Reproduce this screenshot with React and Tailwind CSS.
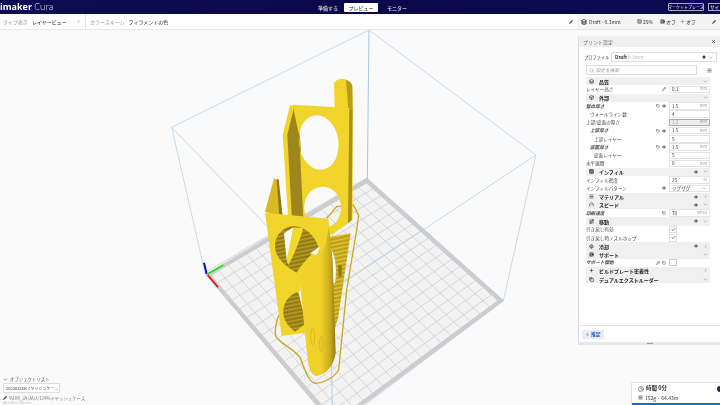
import React from "react";
import { ChevronDown, ChevronLeft, Pencil, RotateCcw, Search, X, Check, Eye, Menu, Clock, Layers, Box, Grid3x3, Gauge, Route, Fan, LifeBuoy, Plus, Copy, Star } from "lucide-react";

const Y = "url(#dots)";
const D = "#9f861c";

function lerp(a, b, t) { return [a[0] + (b[0] - a[0]) * t, a[1] + (b[1] - a[1]) * t]; }
const P0 = [145, 765], P1 = [620, 482], P2 = [1022, 842], P3 = [525, 1210];

function Grid() {
  const lines = [];
  const n = 17;
  for (let i = 1; i < n; i++) {
    const t = i / n;
    const a = lerp(P0, P1, t), b = lerp(P3, P2, t), c = lerp(P0, P3, t), d = lerp(P1, P2, t);
    lines.push(<line key={"a" + i} x1={a[0]} y1={a[1]} x2={b[0]} y2={b[1]} />);
    lines.push(<line key={"b" + i} x1={c[0]} y1={c[1]} x2={d[0]} y2={d[1]} />);
  }
  return <g stroke="#cfcfcf" strokeWidth="2.4">{lines}</g>;
}

function Scene() {
  return (
    <svg className="absolute inset-0" width="720" height="375" viewBox="0 30 720 375">
      <defs>
        <pattern id="stripes" width="6" height="4" patternUnits="userSpaceOnUse" patternTransform="rotate(4)">
          <rect width="6" height="4" fill="#b89b1d" />
          <rect width="6" height="2" fill="#8a7317" />
        </pattern>
        <pattern id="stripes2" width="6" height="4" patternUnits="userSpaceOnUse" patternTransform="rotate(4)">
          <rect width="6" height="4" fill="#e3c427" />
          <rect width="6" height="1.6" fill="#a58c1c" />
        </pattern>
        <pattern id="dots" width="4" height="4" patternUnits="userSpaceOnUse">
          <rect width="4" height="4" fill="#f5d82c" />
          <circle cx="2" cy="2" r="0.8" fill="#dcbb20" />
        </pattern>
        <linearGradient id="cyl2" x1="0" x2="1" y1="0" y2="0">
          <stop offset="0" stopColor="#f2d32a" />
          <stop offset="0.6" stopColor="#f0d028" />
          <stop offset="0.85" stopColor="#c9aa1f" />
          <stop offset="1" stopColor="#8f7818" />
        </linearGradient>
      </defs>
      <g transform="translate(160 20) scale(0.33333)">
        <polygon points={[P0, P1, P2, P3].map((p) => p.join(",")).join(" ")} fill="#f3f3f3" stroke="#cdcdcd" strokeWidth="13" strokeLinejoin="miter" />
        <Grid />
        <g fill="none" stroke="#bcd2e5" strokeWidth="2.4">
          <polygon points="135,758 620,474 1030,842 525,1222" stroke="#b7cde2" />
          <path d="M35 322 L627 30 L1128 405 L510 815 Z" />
          <path d="M35 322 L135 758" />
          <path d="M1128 405 L1030 842" />
          <path d="M627 30 L622 478" stroke="#a7c7e0" strokeWidth="3" />
          <path d="M510 815 L517 1160" stroke="#a7c7e0" />
        </g>

        <path d="M500 595 L530 560 L580 555 L596 585 L590 630 L560 810 L536 1050 C520 1075 490 1090 465 1090 C445 1085 435 1050 420 1012 C400 985 360 970 348 950 C342 930 350 900 357 885" fill="none" stroke="#c9a821" strokeWidth="4" />

        <path d="M522 190 C530 172 565 172 577 195 L578 270 L524 265 Z" fill={Y} />
        <path d="M558 180 C570 184 577 192 577 200 L578 270 L565 268 Z" fill="#b79c1e" />

        <polygon points="390,256 368,345 385,600 432,590 420,350 402,258" fill={Y} />
        <polygon points="402,262 382,345 396,600 432,590 420,350" fill={D} />
        <path fillRule="evenodd" d="M398 254 L570 264 L578 270 L578 600 L515 645 L430 600 L418 350 Z M418 345 A 58 78 -12 1 0 534 390 A 58 78 -12 1 0 418 345 Z M433 555 A 55 62 0 1 0 543 570 A 55 62 0 1 0 433 555 Z" fill={Y} />
        <polygon points="568,264 578,270 575,600 564,610" fill="#a88e1b" />
        <polygon points="342,475 352,480 364,590 315,575" fill="#d9ba23" />
        <polygon points="350,478 356,478 368,590 358,590" fill="#8f7818" />

        <polygon points="510,650 572,640 535,890 515,960 510,800" fill="url(#stripes2)" />
        <path d="M508 680 C525 700 532 740 525 790 L510 790 Z" fill="#fafafa" />
        <polygon points="535,735 545,735 545,770 535,770" fill="#8f7818" />

        <polygon points="315,578 505,596 510,640 505,690 420,800 437,938 365,948" fill={Y} />
        <path d="M345 680 C345 640 375 620 400 618 C440 620 465 650 475 680 C450 710 425 730 410 758 C375 740 345 710 345 680 Z" fill="url(#stripes)" />
        <path d="M372 640 L380 720 L392 690 L400 622 Z" fill="#fafafa" />
        <path d="M400 622 L430 625 C420 660 400 710 385 735 L380 720 Z" fill="#f5d82c" />
        <path d="M370 870 C372 840 395 820 415 815 L438 910 L405 935 C385 920 368 900 370 870 Z" fill="url(#stripes)" />
        <path d="M415 815 L425 812 L438 905 Z" fill="#fafafa" />
        <path d="M450 700 L480 680 L470 705 Z" fill="#fafafa" />

        <path d="M418 770 C425 730 470 710 495 680 L507 620 L518 720 L527 1000 C520 1040 500 1062 470 1068 C455 1066 447 1050 443 1020 Z" fill="url(#cyl2)" />
        <g fill="none" stroke="#c9a91f" strokeWidth="2">
          <ellipse cx="458" cy="950" rx="6" ry="24" />
          <ellipse cx="484" cy="972" rx="5" ry="22" />
        </g>
        <line x1="140" y1="762" x2="132" y2="728" stroke="#1010d0" strokeWidth="6" />
        <line x1="143" y1="762" x2="190" y2="735" stroke="#22e022" strokeWidth="5" />
        <line x1="143" y1="765" x2="174" y2="802" stroke="#e01010" strokeWidth="5" />
      </g>
    </svg>
  );
}

const rows = [
  { s: 1, t: "品質", I: Layers },
  { t: "レイヤー高さ", v: "0.3", u: "mm", pen: true },
  { s: 1, t: "外部", I: Box },
  { t: "壁の厚さ", v: "1.5", u: "mm", it: 1, undo: 1, eye: 1 },
  { t: "ウォールライン数", v: "4", ind: 4 },
  { t: "上部/底面の厚さ", v: "1.2", u: "mm", dim: 1 },
  { t: "上部厚さ", v: "1.5", u: "mm", it: 1, undo: 1, eye: 1, ind: 4 },
  { t: "上部レイヤー", v: "5", ind: 8 },
  { t: "底面厚さ", v: "1.5", u: "mm", it: 1, undo: 1, eye: 1, ind: 4 },
  { t: "底面レイヤー", v: "5", ind: 8 },
  { t: "水平展開", v: "0", u: "mm" },
  { s: 1, t: "インフィル", I: Grid3x3, eye: 1 },
  { t: "インフィル密度", v: "25", u: "%" },
  { t: "インフィルパターン", v: "ジグザグ", sel: 1, eye: 1 },
  { s: 1, t: "マテリアル", I: Menu, eye: 1, left: 1 },
  { s: 1, t: "スピード", I: Gauge, eye: 1 },
  { t: "印刷速度", v: "70", u: "mm/s", it: 1, undo: 1 },
  { s: 1, t: "移動", I: Route, eye: 1 },
  { t: "引き戻し有効", chk: 1 },
  { t: "引き戻し時ノズルホップ", chk: 1 },
  { s: 1, t: "冷却", I: Fan, eye: 1, left: 1 },
  { s: 1, t: "サポート", I: LifeBuoy },
  { t: "サポート開始", box: 1, pen: true, undo: 1, it: 1 },
  { s: 1, t: "ビルドプレート密着性", I: Plus, left: 1 },
  { s: 1, t: "デュアルエクストルーダー", I: Copy },
];

function Row({ r }) {
  if (r.s) {
    return (
      <div className="flex h-[8.26px] items-center bg-[#f0f0f0] px-[2px] text-[5px] leading-none font-bold text-[#222]">
        <span className="flex w-[11px] shrink-0 justify-start pl-[1px]"><r.I size={5} strokeWidth={2.6} /></span>
        <span className="flex-1 whitespace-nowrap">{r.t}</span>
        {r.eye && <Eye size={4} strokeWidth={3} className="mr-[5px]" />}
        {r.left ? <ChevronLeft size={5} className="text-[#666]" /> : <ChevronDown size={5} className="text-[#666]" />}
      </div>
    );
  }
  return (
    <div className="flex h-[8.26px] items-center text-[4.6px] leading-none text-[#444]">
      <span className={"flex-1 whitespace-nowrap " + (r.it ? "italic font-bold" : "")} style={{ paddingLeft: r.ind || 0 }}>{r.t}</span>
      <span className="flex items-center gap-[2px] pr-[3px]">
        {r.pen && <Pencil size={4} strokeWidth={3} className="text-[#444]" />}
        {r.undo && <RotateCcw size={4} strokeWidth={2.6} className="text-[#444]" />}
        {r.eye && <Eye size={4} strokeWidth={3} className="text-[#333]" />}
      </span>
      {r.v !== undefined && (
        <span className={"flex h-[7.4px] w-[41px] items-center justify-between border-[0.5px] px-[2px] " + (r.dim ? "border-[#aaa] bg-[#eee] text-[#999]" : "border-[#e4e4e4] bg-white")}>
          <span>{r.v}</span>
          {r.sel ? <ChevronDown size={5} className="text-[#666]" /> : <span className="text-[3.8px] text-[#999]">{r.u}</span>}
        </span>
      )}
      {r.chk && (
        <span className="mr-[33px] flex h-[7.4px] w-[8px] items-center justify-center border-[0.5px] border-[#ddd] bg-white"><Check size={5} strokeWidth={3} className="text-[#333]" /></span>
      )}
      {r.box && <span className="mr-[33px] h-[7.4px] w-[8px] border-[0.5px] border-[#ccc] bg-white" />}
    </div>
  );
}

function SettingsPanel() {
  return (
    <aside className="absolute left-[578px] top-[6px] flex h-[309px] w-[142px] flex-col border-l border-[#ddd] bg-white">
      <div className="flex h-[11px] items-center justify-between bg-[#f0f0f0] px-[4px] text-[5px] leading-none text-[#666]">
        <span>プリント設定</span>
        <X size={5} strokeWidth={3} className="text-[#444]" />
      </div>
      <div className="mt-[5px] flex h-[10px] items-center pl-[5px] pr-[3px] text-[4.2px] leading-none text-[#333]">
        <span className="w-[27px] whitespace-nowrap">プロファイル</span>
        <span className="flex h-full flex-1 items-center justify-between border-[0.5px] border-[#ddd] px-[3px] text-[4.8px]">
          <span className="font-bold">Draft <span className="font-normal text-[#bbb]">0.3mm</span></span>
          <span className="flex items-center gap-[2px]"><Star size={4} fill="#333" /><ChevronDown size={5} className="text-[#666]" /></span>
        </span>
      </div>
      <div className="mt-[3px] flex h-[10px] items-center pl-[7px] pr-[8px]">
        <span className="flex h-full w-[111px] items-center gap-[2px] border-[0.5px] border-[#ddd] px-[2px] text-[4.6px] leading-none italic text-[#999]"><Search size={5} />設定を検索</span>
        <Menu size={5} strokeWidth={3} className="ml-auto text-[#555]" />
      </div>
      <div className="mt-[2px] flex flex-col pl-[7px] pr-[10px]">
        {rows.map((r, i) => <Row key={i} r={r} />)}
      </div>
      <div className="mt-auto flex h-[17px] items-center border-t border-[#e5e5e5] pl-[3px]">
        <span className="flex h-[9px] items-center gap-[1px] bg-[#e9eef5] px-[3px] text-[4.8px] leading-none font-bold text-[#2a5ca8]"><ChevronLeft size={5} strokeWidth={3} />推定</span>
      </div>
      <div className="flex h-[3px] items-center justify-center bg-[#e8e8e8]"><span className="h-[1px] w-[6px] bg-[#999]" /></div>
    </aside>
  );
}

export default function App() {
  return (
    <div className="flex h-[405px] w-[720px] flex-col overflow-hidden bg-[#fafafa] blur-[0.3px]" style={{ fontFamily: '"Noto Sans CJK JP", "Noto Sans", sans-serif' }}>
      <header className="relative flex h-[14px] shrink-0 items-center bg-gradient-to-r from-[#0c0c52] via-[#09094a] to-[#0b0b55] text-white">
        <span className="flex-1 whitespace-nowrap text-[9px] leading-[14px]" style={{ fontFamily: '"Open Sans", sans-serif' }}>
          <span className="font-bold">imaker</span> <span className="font-light text-[#dfe0f0]">Cura</span>
        </span>
        <nav className="absolute left-[318px] top-0 flex h-[14px] items-center text-[5px] leading-none">
          <span className="w-[26px] whitespace-nowrap">準備する</span>
          <span className="flex h-[9px] w-[34px] items-center justify-center rounded-[1px] bg-white text-[#222]">プレビュー</span>
          <span className="ml-[9px] whitespace-nowrap">モニター</span>
        </nav>
        <div className="flex items-center gap-[4px] text-[4px] leading-none">
          <span className="flex h-[8px] w-[36px] items-center justify-center whitespace-nowrap rounded-[1px] border-[0.5px] border-[#aab]">マーケットプレース</span>
          <span className="flex h-[8px] w-[12px] items-center whitespace-nowrap rounded-l-[1px] border-[0.5px] border-r-0 border-[#aab] pl-[1px] text-[4.6px]">サイ</span>
        </div>
      </header>

      <div className="flex h-[16px] shrink-0 items-stretch border-b border-[#e6e6e6] bg-white text-[5px] leading-none">
        <div className="flex w-[86px] items-center border-r border-[#e6e6e6] pl-[3px] pr-[4px]">
          <span className="mr-[4px] text-[#999]">タイプ表示</span>
          <span className="text-[#222]">レイヤービュー</span>
          <ChevronLeft size={5} className="ml-auto text-[#555]" />
        </div>
        <div className="flex flex-1 items-center px-[4px]">
          <span className="mr-[4px] text-[#999]">カラースキーム</span>
          <span className="text-[#222]">フィラメントの色</span>
          <Pencil size={4} fill="#444" className="ml-auto text-[#444]" />
        </div>
        <div className="flex w-[143px] items-center bg-[#f4f4f4] pl-[4px] text-[5px] text-[#333]">
          <Layers size={6} strokeWidth={3} className="mr-[2px] text-[#222]" />
          <span className="w-[43px] whitespace-nowrap">Draft - 0.3mm</span>
          <Grid3x3 size={5} className="ml-[5px] mr-[1px] text-[#555]" />
          <span className="w-[17px]">25%</span>
          <LifeBuoy size={5} strokeWidth={3} className="mr-[1px] text-[#333]" />
          <span className="w-[13px]">オフ</span>
          <Plus size={5} className="mx-[1px] text-[#666]" />
          <span className="w-[26px]">オフ</span>
          <Pencil size={4} fill="#444" className="text-[#444]" />
        </div>
      </div>

      <main className="relative flex-1">
        <Scene />
        <SettingsPanel />

        <div className="absolute bottom-0 left-[3px] flex w-[90px] flex-col text-[4.4px] leading-none text-[#555]">
          <div className="flex h-[6px] items-center gap-[2px] whitespace-nowrap"><ChevronDown size={5} strokeWidth={3} />オブジェクトリスト</div>
          <div className="mt-[1px] flex h-[10px] w-[57px] items-center whitespace-nowrap border-[0.5px] border-[#ddd] bg-white px-[2px] text-[4px] text-[#333]">20230124Hイヤッシュケー...</div>
          <div className="mt-[2px] flex h-[6px] items-center gap-[2px] whitespace-nowrap text-[#777]"><Pencil size={4} fill="#333" className="text-[#333]" />%UM_JA/JA/J/124%イヤッシュケース</div>
          <div className="h-[4px] whitespace-nowrap text-[3.6px] text-[#bbb]">50 x 50 x 150 mm</div>
        </div>

        <div className="absolute bottom-0 left-[631px] flex h-[23px] w-[89px] flex-col rounded-tl-[2px] border-l border-t border-[#e2e2e2] bg-white text-[#333]">
          <div className="flex h-[10px] items-center gap-[2px] pl-[6px] pt-[2px] text-[5.5px] leading-none font-bold"><Clock size={6} strokeWidth={2} />時間 0分<span className="ml-auto h-[6px] w-[3px] rounded-l-full bg-[#1d2b55]" /></div>
          <div className="flex h-[9px] items-center gap-[2px] pl-[6px] text-[5px] leading-none"><Menu size={5} strokeWidth={3} />152g · 64.43m</div>
          <div className="mt-auto h-[2px] bg-[#1f66c9]" />
        </div>
      </main>
    </div>
  );
}
